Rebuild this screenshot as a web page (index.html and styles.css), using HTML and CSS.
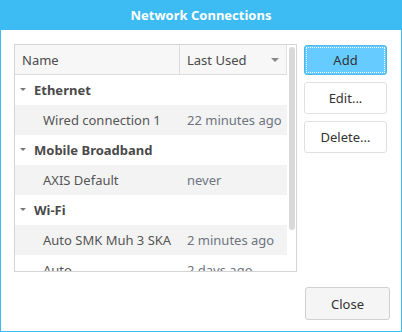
FILE: index.html
```html
<!DOCTYPE html>
<html lang="en">
<head>
    <meta charset="UTF-8">
    <title>Network Connections</title>
    <link rel="stylesheet" href="styles.css">
</head>
<body>
    <div class="window">
        <!-- title bar -->
        <div class="titlebar">Network Connections</div>

        <div class="content">
            <div class="main">
                <!-- connection list -->
                <div class="tree">
                    <div class="list">
                        <div class="row header">
                            <div class="col-name">Name</div>
                            <div class="col-used">Last Used <span class="sort-arrow"></span></div>
                        </div>
                        <div class="row group">
                            <div class="col-name"><span class="expander"></span>Ethernet</div>
                        </div>
                        <div class="row item alt">
                            <div class="col-name">Wired connection 1</div>
                            <div class="col-used">22 minutes ago</div>
                        </div>
                        <div class="row group">
                            <div class="col-name"><span class="expander"></span>Mobile Broadband</div>
                        </div>
                        <div class="row item alt">
                            <div class="col-name">AXIS Default</div>
                            <div class="col-used">never</div>
                        </div>
                        <div class="row group">
                            <div class="col-name"><span class="expander"></span>Wi-Fi</div>
                        </div>
                        <div class="row item alt">
                            <div class="col-name">Auto SMK Muh 3 SKA</div>
                            <div class="col-used">2 minutes ago</div>
                        </div>
                        <div class="row item">
                            <div class="col-name">Auto</div>
                            <div class="col-used">2 days ago</div>
                        </div>
                    </div>
                    <div class="scrollbar"><div class="thumb"></div></div>
                </div>

                <!-- actions -->
                <div class="actions">
                    <button class="btn btn-default">Add</button>
                    <button class="btn">Edit...</button>
                    <button class="btn">Delete...</button>
                </div>
            </div>

            <div class="footer">
                <button class="btn btn-close">Close</button>
            </div>
        </div>
    </div>
</body>
</html>
```

FILE: styles.css
```css
* { box-sizing: border-box; }
body {
    margin: 0;
    font-family: "Noto Sans", "Open Sans", sans-serif;
    font-size: 13px;
    background: #fff;
}

.window {
    width: 402px;
    height: 332px;
    display: flex;
    flex-direction: column;
    background: #fff;
}

/* title bar */
.titlebar {
    height: 30px;
    background: #3dbcf3;
    color: #fff;
    font-weight: bold;
    font-size: 13px;
    display: flex;
    align-items: center;
    justify-content: center;
    padding-bottom: 1px;
}

.content {
    flex: 1;
    display: flex;
    flex-direction: column;
    border: 1px solid #3dbcf3;
    border-top: none;
    padding: 14px 13px 11px 13px;
}

.main {
    display: flex;
    gap: 7px;
}

/* tree view */
.tree {
    width: 283px;
    height: 228px;
    border: 1px solid #d4d4d4;
    display: flex;
    overflow: hidden;
}
.list {
    flex: 1;
    overflow: hidden;
}
.row {
    display: flex;
    height: 30px;
    align-items: center;
    color: #555;
}
.row.alt { background: #f3f3f3; }
.col-name {
    width: 165px;
    padding-left: 7px;
    display: flex;
    align-items: center;
    white-space: nowrap;
}
.col-used {
    flex: 1;
    padding-left: 7px;
    color: #6d7480;
    white-space: nowrap;
    display: flex;
    align-items: center;
}

.header {
    background: #f7f7f7;
    border-bottom: 1px solid #dcdcdc;
    border-right: 1px solid #e2e2e2;
    color: #4a4a4a;
    height: 30px;
}
.header .col-name {
    border-right: 1px solid #dcdcdc;
    height: 100%;
}
.header .col-used { color: #4a4a4a; }
.sort-arrow {
    margin-left: auto;
    margin-right: 7px;
    width: 0;
    height: 0;
    border-left: 4px solid transparent;
    border-right: 4px solid transparent;
    border-top: 4px solid #888;
}

.group .col-name {
    font-weight: bold;
    color: #4a4a4a;
    padding-left: 5px;
}
.expander {
    width: 0;
    height: 0;
    border-left: 3px solid transparent;
    border-right: 3px solid transparent;
    border-top: 3px solid #777;
    margin-right: 8px;
    margin-top: -2px;
}
.item .col-name { padding-left: 28px; }

.scrollbar {
    width: 9px;
    padding: 2px 1px 0 2px;
}
.thumb {
    width: 6px;
    height: 183px;
    background: #d9d9d9;
    border-radius: 3px;
}

/* buttons */
.actions {
    display: flex;
    flex-direction: column;
    gap: 7px;
    padding-top: 1px;
}
.btn {
    width: 83px;
    height: 32px;
    font-family: inherit;
    font-size: 13px;
    color: #333;
    background: #fff;
    border: 1px solid #e0e0e0;
    border-radius: 3px;
}
.btn-default {
    height: 30px;
    background: #66ccff;
    border: 1px solid #4db8f0;
    outline: 1px dotted #fff;
    outline-offset: -3px;
}

.footer {
    margin-top: auto;
    display: flex;
    justify-content: flex-end;
}
.btn-close {
    width: 85px;
    height: 33px;
    background: #f5f5f5;
    border-color: #d0d0d0;
    margin-right: -2px;
}
```
